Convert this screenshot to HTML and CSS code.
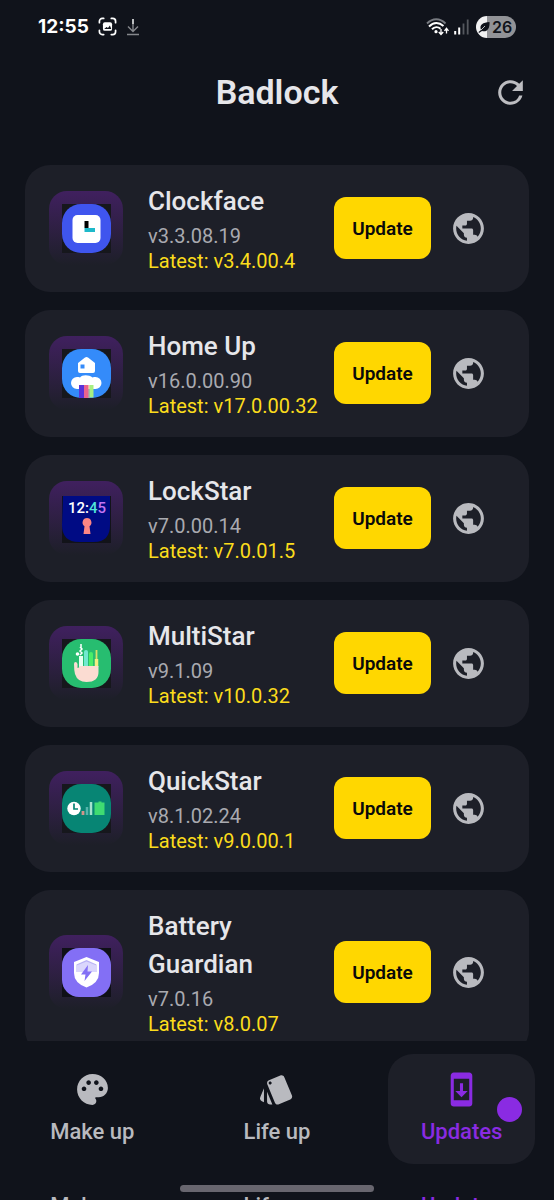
FILE: index.html
```html
<!DOCTYPE html>
<html lang="en">
<head>
<meta charset="utf-8">
<meta name="viewport" content="width=device-width, initial-scale=1">
<title>Badlock</title>
<link rel="stylesheet" href="styles.css">
</head>
<body>
<svg class="defs" aria-hidden="true">
  <symbol id="globe" viewBox="0 0 24 24"><path d="M12 2C6.48 2 2 6.48 2 12s4.48 10 10 10 10-4.480 10-10S17.520 2 12 2zm-1 17.930c-3.950-.49-7-3.850-7-7.930 0-.62.08-1.210.21-1.790L9 15v1c0 1.100.9 2 2 2v1.930zm6.900-2.540c-.26-.81-1-1.390-1.900-1.390h-1v-3c0-.55-.45-1-1-1H8v-2h2c.55 0 1-.45 1-1V7h2c1.100 0 2-.9 2-2v-.41c2.930 1.190 5 4.060 5 7.410 0 2.080-.8 3.970-2.100 5.390z"/></symbol>
</svg>
<div class="app">
  <div class="status">
    <div class="status-group">
      <span class="clock">12:55</span>
      <svg class="shot" viewBox="0 0 20 20" aria-hidden="true"><path d="M1.500 6V4.500a3 3 0 0 1 3-3H6M14 1.500h1.500a3 3 0 0 1 3 3V6M18.500 14v1.500a3 3 0 0 1-3 3H14M6 18.500H4.500a3 3 0 0 1-3-3V14" fill="none" stroke="#fff" stroke-width="1.800" stroke-linecap="round"/><rect x="5.200" y="5.500" width="9.600" height="9" rx="2" fill="#fff"/><path d="M6.500 12.500l2.500-2 1.500 1 2-2.500 1.500 3.500z" fill="#10131b"/></svg>
      <svg class="down" viewBox="0 0 14 18" aria-hidden="true"><path d="M7 1v12M2 8.500l5 5 5-5M1 16.500h12" fill="none" stroke="#85878c" stroke-width="1.400"/><path d="M7 1v5" stroke="#e4e5e7" stroke-width="1.400"/></svg>
    </div>
    <div class="status-group right">
      <svg class="wifi" viewBox="0 0 23 18" aria-hidden="true"><path d="M1 5.500C6.500-.2 14-.2 19.500 5.500" fill="none" stroke="#777a80" stroke-width="1.900"/><path d="M3 8.500c4.500-4.500 10-4.500 14.500-.5M6 11.300c2.500-2.600 6-2.600 8.500-.6" fill="none" stroke="#fff" stroke-width="2"/><circle cx="10" cy="13.700" r="1.600" fill="#fff"/><path d="M15 11v5M12.800 14l2.200 2.500 2.200-2.500M20.500 15.500v-4.500M18.500 12.800l2-2.500 2 2.500" fill="none" stroke="#fff" stroke-width="1.300"/></svg>
      <svg class="signal" viewBox="0 0 15 16" aria-hidden="true"><path d="M1.200 12v3.500M5.200 8.500v7" stroke="#fff" stroke-width="2"/><path d="M9.500 4.500v11M13.700.5v15" stroke="#55585e" stroke-width="1.800"/></svg>
      <div class="battery">
        <svg viewBox="0 0 12 12" aria-hidden="true"><path d="M.5 11L3 9C1 3.500 5 1.500 11.500 1 12 7.500 9 11.500 4 10L1 12z" fill="#10131b"/><path d="M3 9l4-4" stroke="#cfd0d2" stroke-width=".9"/></svg>
        <span>26</span>
      </div>
    </div>
  </div>

  <header class="header">
    <h1>Badlock</h1>
    <button class="refresh" type="button" aria-label="Refresh"><svg class="icon" viewBox="0 0 24 24"><path d="M17.650 6.350A7.958 7.958 0 0 0 12 4c-4.420 0-7.990 3.580-7.990 8s3.570 8 7.990 8c3.730 0 6.840-2.550 7.730-6h-2.080A5.990 5.990 0 0 1 12 18c-3.310 0-6-2.690-6-6s2.690-6 6-6c1.660 0 3.140.69 4.220 1.780L13 11h7V4l-2.350 2.350z"/></svg></button>
  </header>

  <main class="list">
    <article class="card">
      <div class="tile"><svg viewBox="0 0 49 49" aria-hidden="true"><path fill="#16171c" d="M0 0h49v49H0z"/><rect width="49" height="49" rx="19" fill="#3f55ee"/><rect x="10.500" y="11" width="28" height="28" rx="5" fill="#fff"/><path fill="#000" d="M22.500 17h4v7h-4z"/><path fill="#1eb9ca" d="M22.500 24h10.500v4H22.500z"/></svg></div>
      <div class="info"><h2>Clockface</h2><p>v3.3.08.19</p><p class="latest">Latest: v3.4.00.4</p></div>
      <button class="update" type="button">Update</button>
      <a class="web" href="#clockface" aria-label="Clockface website"><svg class="icon"><use href="#globe"/></svg></a>
    </article>
    <article class="card">
      <div class="tile"><svg viewBox="0 0 49 49" aria-hidden="true"><path fill="#16171c" d="M0 0h49v49H0z"/><rect width="49" height="49" rx="19" fill="#348bfa"/><path fill="#fff" d="M16 14l7-5.500q1.500-1.200 3 0L33 14v8q0 2-2 2H18q-2 0-2-2z"/><path fill="#348bfa" d="M18.500 15.500h4v4h-4z"/><path fill="#fff" d="M15 40a6 6 0 0 1 0-12c1 0 2 0 3 .5 2-3 9-3 12.500 0 1-.5 2-.5 3-.5a6 6 0 0 1 0 12z"/><path fill="#5932d9" d="M17 36h5v13h-5z"/><path fill="#ea638e" d="M22 36h4.500v13H22z"/><path fill="#efad80" d="M26.500 36h1v13h-1z"/><path fill="#a8ef82" d="M27.500 36h4v12.500h-4z"/></svg></div>
      <div class="info"><h2>Home Up</h2><p>v16.0.00.90</p><p class="latest">Latest: v17.0.00.32</p></div>
      <button class="update" type="button">Update</button>
      <a class="web" href="#home-up" aria-label="Home Up website"><svg class="icon"><use href="#globe"/></svg></a>
    </article>
    <article class="card">
      <div class="tile"><svg viewBox="0 0 49 49" aria-hidden="true"><path fill="#121319" d="M0 2h49v47H0z"/><path fill="#000b84" d="M1 2h47v29q0 17-16 17H17Q0 48 0 31z"/><text class="face-time" x="25" y="19" text-anchor="middle" fill="#fff">12:<tspan fill="#50e6d8">4</tspan><tspan fill="#c474f3">5</tspan></text><path fill="#fd8584" d="M25 24a4.500 4.500 0 0 1 2.500 8.200L28.500 40h-7l1-7.800A4.500 4.500 0 0 1 25 24z"/></svg></div>
      <div class="info"><h2>LockStar</h2><p>v7.0.00.14</p><p class="latest">Latest: v7.0.01.5</p></div>
      <button class="update" type="button">Update</button>
      <a class="web" href="#lockstar" aria-label="LockStar website"><svg class="icon"><use href="#globe"/></svg></a>
    </article>
    <article class="card">
      <div class="tile"><svg viewBox="0 0 49 49" aria-hidden="true"><path fill="#16171c" d="M0 0h49v49H0z"/><rect width="49" height="49" rx="19" fill="#27bd70"/><path d="M19 17v11" stroke="#e6fff1" stroke-width="4"/><path d="M19 5v4M18 8l2 2-2 2 2 2-2 2M14 15h3" fill="none" stroke="#fff" stroke-width="1.500"/><circle cx="15.500" cy="15" r="1.800" fill="#fff"/><path d="M24 13v15" stroke="#72e9cf" stroke-width="4" stroke-linecap="round"/><path d="M29 15v13" stroke="#4aee68" stroke-width="4" stroke-linecap="round"/><path d="M34.500 20v8" stroke="#f3ee83" stroke-width="3.500"/><path d="M34.500 11v9" stroke="#d9df67" stroke-width="1.800"/><path fill="#fbdcd2" d="M12 25q0-2 1.500-2T15.500 25v4q2 0 2-2h19v6q0 10-12 10-9 0-11.500-8-1-4-1-10z"/></svg></div>
      <div class="info"><h2>MultiStar</h2><p>v9.1.09</p><p class="latest">Latest: v10.0.32</p></div>
      <button class="update" type="button">Update</button>
      <a class="web" href="#multistar" aria-label="MultiStar website"><svg class="icon"><use href="#globe"/></svg></a>
    </article>
    <article class="card">
      <div class="tile"><svg viewBox="0 0 49 49" aria-hidden="true"><path fill="#16171c" d="M0 0h49v49H0z"/><rect width="49" height="49" rx="19" fill="#078574"/><circle cx="12" cy="24.500" r="6.700" fill="#fff"/><path d="M12 19.500v5.500h4" fill="none" stroke="#078574" stroke-width="1.700"/><path d="M21 27v4" stroke="#d3948a" stroke-width="2.800"/><path d="M25 23v8" stroke="#55b5ac" stroke-width="2.500"/><path d="M29 18v13" stroke="#a5e1ce" stroke-width="2.500"/><path fill="#3fdc72" d="M32.500 18.500h4v-1h3v1h3V31h-10z"/></svg></div>
      <div class="info"><h2>QuickStar</h2><p>v8.1.02.24</p><p class="latest">Latest: v9.0.00.1</p></div>
      <button class="update" type="button">Update</button>
      <a class="web" href="#quickstar" aria-label="QuickStar website"><svg class="icon"><use href="#globe"/></svg></a>
    </article>
    <article class="card">
      <div class="tile"><svg viewBox="0 0 49 49" aria-hidden="true"><path fill="#0f1016" d="M0 0h49v49H0z"/><rect width="49" height="49" rx="17" fill="#836ff5"/><path fill="#fff" d="M24.500 9L37 14v11q0 10-12.500 14.500Q12 35 12 25V14z"/><path fill="#b9b2f5" d="M24.500 12l10 4.500v7.500h-20v-7.500z"/><path fill="#dad6fc" d="M14.500 17.500l10-4 10 4v6.500h-20z"/><path fill="#836ff5" d="M26 17l-7 9.500h4.500L22.500 33l7.500-9.500h-4.500z"/></svg></div>
      <div class="info"><h2>Battery Guardian</h2><p>v7.0.16</p><p class="latest">Latest: v8.0.07</p></div>
      <button class="update" type="button">Update</button>
      <a class="web" href="#battery-guardian" aria-label="Battery Guardian website"><svg class="icon"><use href="#globe"/></svg></a>
    </article>
  </main>

  <footer class="bottom">
    <nav class="tabs">
      <a class="tab" href="#make-up"><svg class="icon" viewBox="0 0 24 24" aria-hidden="true"><path d="M12 2C6.490 2 2 6.490 2 12s4.490 10 10 10c1.380 0 2.500-1.120 2.500-2.500 0-.61-.23-1.200-.64-1.670-.08-.1-.13-.21-.13-.33 0-.28.22-.5.5-.5H16c3.310 0 6-2.690 6-6 0-4.960-4.490-9-10-9zm5.500 11c-.83 0-1.500-.67-1.500-1.500s.67-1.500 1.500-1.500 1.500.67 1.500 1.500-.67 1.500-1.500 1.500zm-3-4c-.83 0-1.500-.67-1.500-1.500S13.670 6 14.500 6s1.500.67 1.500 1.500S15.330 9 14.500 9zM5 11.500c0-.83.67-1.500 1.500-1.500s1.500.67 1.500 1.500S7.330 13 6.500 13 5 12.330 5 11.500zm6-4c0 .83-.67 1.500-1.500 1.500S8 8.330 8 7.500 8.670 6 9.500 6s1.500.67 1.500 1.500z"/></svg><span>Make up</span></a>
      <a class="tab" href="#life-up"><svg class="icon" viewBox="0 0 24 24" aria-hidden="true"><path d="M2.530 19.650l1.340.56v-9.030l-2.430 5.860c-.41 1.020.08 2.190 1.090 2.610zm19.500-3.700L17.070 3.980c-.31-.75-1.040-1.210-1.810-1.230-.26 0-.53.04-.79.15L7.100 5.950c-.75.31-1.210 1.030-1.230 1.800-.01.27.04.54.15.8l4.960 11.970c.31.76 1.050 1.220 1.830 1.230.26 0 .52-.05.77-.15l7.360-3.050c1.020-.42 1.510-1.590 1.090-2.600zM7.880 8.750c-.55 0-1-.45-1-1s.45-1 1-1 1 .45 1 1-.45 1-1 1zm-2 11c0 1.100.9 2 2 2h1.450l-3.450-8.340v6.340z"/></svg><span>Life up</span></a>
      <a class="tab active" href="#updates" aria-current="page"><svg class="icon" viewBox="0 0 24 24" aria-hidden="true"><path d="M17 1.010L7 1c-1.100 0-2 .9-2 2v18c0 1.100.9 2 2 2h10c1.100 0 2-.9 2-2V3c0-1.100-.9-1.990-2-1.990zM17 19H7V5h10v14zm-1-6h-3V8h-2v5H8l4 4 4-4z"/></svg><span>Updates</span><i class="badge"></i></a>
    </nav>
    <div class="gesture"></div>
    <div class="peek" aria-hidden="true"><span>Make up</span><span>Life up</span><span class="active">Updates</span></div>
  </footer>
</div>
</body>
</html>
```
FILE: styles.css
```css
* {
  box-sizing: border-box;
}

body {
  margin: 0;
  background: #10131b;
  color: #e6e6ea;
  font-family: Roboto, "Liberation Sans", sans-serif;
}

h1, h2, p {
  margin: 0;
}

button {
  border: 0;
  font-family: inherit;
  cursor: pointer;
}

.defs {
  display: none;
}

.app {
  display: flex;
  flex-direction: column;
  height: 100vh;
  overflow: hidden;
}

.icon {
  display: block;
  width: 37px;
  height: 37px;
  fill: currentColor;
}

/* Status bar */
.status {
  display: flex;
  justify-content: space-between;
  align-items: center;
  flex: none;
  height: 53px;
  padding: 0 38px;
}

.status-group {
  display: flex;
  align-items: center;
  gap: 9px;
}

.status-group.right {
  gap: 5px;
}

.clock {
  color: #fff;
  font: 700 19px/24px Inter, sans-serif;
}

.shot {
  width: 19px;
  height: 19px;
}

.down {
  width: 14px;
  height: 18px;
}

.wifi {
  width: 23px;
  height: 18px;
}

.signal {
  width: 15px;
  height: 16px;
}

.battery {
  display: flex;
  align-items: center;
  gap: 2px;
  width: 40px;
  height: 22px;
  margin-left: 2px;
  padding-left: 2px;
  border-radius: 11px;
  background: linear-gradient(90deg, #f1f1f2 11px, #929397 11px);
  color: #10131b;
  font: 600 16px/22px Inter, sans-serif;
}

.battery svg {
  width: 12px;
  height: 12px;
}

/* Header */
.header {
  display: grid;
  grid-template-columns: 1fr auto 1fr;
  align-items: center;
  flex: none;
  height: 112px;
  padding: 0 25px 34px;
}

.header h1 {
  grid-column: 2;
  font-size: 34px;
  font-weight: 600;
  line-height: 44px;
}

.refresh {
  justify-self: end;
  padding: 0;
  background: none;
  color: #bdbdc1;
}

/* App list */
.list {
  display: flex;
  flex: 1;
  flex-direction: column;
  gap: 18px;
  min-height: 0;
  padding: 0 25px;
  overflow: hidden;
}

.card {
  display: flex;
  flex: none;
  align-items: center;
  padding: 17px 24px 18px;
  border-radius: 25px;
  background: #1d1f28;
}

.tile {
  display: grid;
  place-items: center;
  flex: none;
  width: 74px;
  height: 74px;
  border-radius: 18px;
  background: linear-gradient(#40205f, #1d1f28);
}

.tile svg {
  width: 49px;
  height: 49px;
}

.face-time {
  font: 500 15px Roboto, sans-serif;
}

.info {
  flex: 1;
  min-width: 0;
  padding: 0 12px 0 25px;
}

.info h2 {
  margin-bottom: 4px;
  font-size: 26px;
  font-weight: 500;
  line-height: 38px;
}

.info p {
  color: #a9aab0;
  font-size: 20px;
  line-height: 25px;
  white-space: nowrap;
}

.info .latest {
  color: #fbdc1c;
}

.update {
  flex: none;
  width: 97px;
  height: 62px;
  padding: 0;
  border-radius: 12px;
  background: #ffd700;
  color: #0a0a0a;
  font-size: 19px;
  font-weight: 600;
}

.web {
  display: grid;
  place-items: center;
  flex: none;
  width: 74px;
  height: 62px;
  color: #b9babf;
}

/* Bottom navigation */
.bottom {
  flex: none;
  padding-top: 13px;
}

.tabs {
  display: grid;
  grid-template-columns: repeat(3, 1fr);
}

.tab {
  position: relative;
  display: flex;
  flex-direction: column;
  align-items: center;
  gap: 10px;
  height: 110px;
  margin: 0 19px;
  padding-top: 17px;
  border-radius: 25px;
  color: #b9babf;
  font-size: 22px;
  font-weight: 500;
  line-height: 27px;
  text-decoration: none;
  white-space: nowrap;
}

.tab.active {
  background: #1d1f28;
  color: #8a2be2;
}

.badge {
  position: absolute;
  top: 43px;
  right: 13px;
  width: 25px;
  height: 25px;
  border-radius: 50%;
  background: #8a2be2;
}

.gesture {
  width: 35%;
  height: 7px;
  margin: 21px auto 5px;
  border-radius: 4px;
  background: #68666f;
}

/* Top edge of the next row of labels, cut off by the screen */
.peek {
  display: grid;
  grid-template-columns: repeat(3, 1fr);
  height: 3px;
  overflow: hidden;
  color: #b9babf;
  font-size: 22px;
  font-weight: 500;
  line-height: 17px;
  text-align: center;
}

.peek .active {
  color: #8a2be2;
}
```
